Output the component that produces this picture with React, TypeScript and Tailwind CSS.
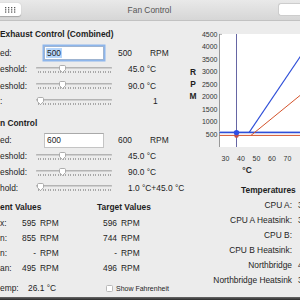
import React from "react";

const Slider = ({ pos }: { pos: number }) => (
  <div className="relative w-[76px] h-[12px] shrink-0">
    <div className="absolute left-0 right-0 top-[3px] h-[2px] rounded-full bg-[#d0d0d0] shadow-[inset_0_1px_0_#b4b4b4]" />
    <div className="absolute left-[2px] right-[1px] top-[7px] h-[2px] bg-[repeating-linear-gradient(90deg,#a8a8a8_0_1px,transparent_1px_2.5px)]" />
    <svg
      className="absolute top-[1px]"
      style={{ left: pos - 3.5 }}
      width="7"
      height="8"
      viewBox="0 0 7 8"
    >
      <path
        d="M0.5 1.6 Q0.5 0.5 1.6 0.5 H5.4 Q6.5 0.5 6.5 1.6 V4.6 L3.5 7.5 L0.5 4.6 Z"
        fill="#ffffff"
        stroke="#9c9c9c"
        strokeWidth="0.8"
      />
    </svg>
  </div>
);

const SliderRow = ({
  h,
  label,
  pos,
  value,
  valueMl,
}: {
  h: string;
  label: string;
  pos: number;
  value: string;
  valueMl: string;
}) => (
  <div className={`${h} flex items-center whitespace-nowrap`}>
    <span className="w-[36px] shrink-0">{label}</span>
    <Slider pos={pos} />
    <span className={valueMl}>{value}</span>
  </div>
);

const ValRow = ({ label, cur, tgt }: { label: string; cur: string; tgt: string }) => (
  <div className="h-[15px] flex items-center whitespace-nowrap">
    <span className="w-[20px] shrink-0">{label}</span>
    <span className="w-[16px] text-right shrink-0">{cur}</span>
    <span className="ml-[4px] w-[40px] shrink-0">RPM</span>
    <span className="w-[37px] text-right shrink-0">{tgt}</span>
    <span className="ml-[4px]">RPM</span>
  </div>
);

const TempRow = ({ label, value }: { label: string; value: string }) => (
  <div className="h-[15px] flex items-center whitespace-nowrap">
    <span className="w-[104px] text-right shrink-0">{label}</span>
    <span className="ml-[6px]">{value}</span>
  </div>
);

export default function App() {
  const yLabels = [4500, 4000, 3500, 3000, 2500, 2000, 1500, 1000, 500];
  const xLabels = [30, 40, 50, 60, 70];
  return (
    <div className="w-[300px] h-[300px] overflow-hidden flex flex-col bg-[#ececec] text-[#1e1e1e] text-[8.4px] leading-none font-['Liberation_Sans',Arial,sans-serif]">
      {/* title bar */}
      <div className="h-[21px] shrink-0 flex items-start border-b border-[#c2c2c2] bg-gradient-to-b from-[#e9e9e9] to-[#d6d6d6]">
        <div className="mt-[3px] w-[21px] h-[13px] rounded-r-[3px] bg-white shadow-[0_0.5px_1px_rgba(0,0,0,0.25)] flex items-center justify-center shrink-0">
          <svg width="11" height="6" viewBox="0 0 11 6">
            {[0, 1, 2].map((r) =>
              [0, 1, 2, 3].map((c) => (
                <rect key={`${r}-${c}`} x={c * 3} y={r * 2.2} width="1.3" height="1.3" fill="#5a5a5a" />
              ))
            )}
          </svg>
        </div>
        <div className="flex-1 h-[20px] flex items-center justify-center text-[#555555]">Fan Control</div>
        <div className="mt-[3px] w-[22px] h-[13px] rounded-l-[3px] bg-white border border-r-0 border-[#cdcdcd] shrink-0" />
      </div>

      {/* content */}
      <div className="flex-1 flex min-h-0">
        {/* left column */}
        <div className="w-[188px] shrink-0 flex flex-col pt-[7px]">
          <div className="h-[12px] flex items-center font-bold whitespace-nowrap">Exhaust Control (Combined)</div>
          <div className="mt-[5px] h-[16px] flex items-center whitespace-nowrap">
            <span className="w-[44px] shrink-0">ed:</span>
            <div className="w-[60px] h-[14px] shrink-0 bg-white border border-[#9fb4d0] ring-[1.5px] ring-[#8db6ec] flex items-center pl-[1px]">
              <span className="bg-[#b6d6fb] px-[1px] leading-[10px]">500</span>
            </div>
            <span className="ml-[14px] w-[32px] shrink-0">500</span>
            <span>RPM</span>
          </div>
          <SliderRow h="h-[17px]" label="eshold:" pos={26} value="45.0 °C" valueMl="ml-[16px]" />
          <SliderRow h="h-[16px]" label="eshold:" pos={26} value="90.0 °C" valueMl="ml-[16px]" />
          <SliderRow h="h-[15px]" label=":" pos={4} value="1" valueMl="ml-[41px]" />

          <div className="mt-[8px] h-[12px] flex items-center font-bold whitespace-nowrap">n Control</div>
          <div className="mt-[3px] h-[16px] flex items-center whitespace-nowrap">
            <span className="w-[44px] shrink-0">ed:</span>
            <div className="w-[60px] h-[15px] shrink-0 bg-white border border-[#c4c4c4] border-t-[#a9a9a9] flex items-center pl-[2px]">
              <span>600</span>
            </div>
            <span className="ml-[14px] w-[32px] shrink-0">600</span>
            <span>RPM</span>
          </div>
          <SliderRow h="h-[17px]" label="eshold:" pos={26} value="45.0 °C" valueMl="ml-[16px]" />
          <SliderRow h="h-[15px]" label="eshold:" pos={26} value="90.0 °C" valueMl="ml-[16px]" />
          <SliderRow h="h-[16px]" label="hold:" pos={4} value="1.0 °C+45.0 °C" valueMl="ml-[16px]" />

          <div className="mt-[5px] h-[12px] flex items-center font-bold whitespace-nowrap">
            <span className="w-[97px] shrink-0">ent Values</span>
            <span>Target Values</span>
          </div>
          <div className="mt-[3px] flex flex-col">
            <ValRow label="x:" cur="595" tgt="596" />
            <ValRow label="n:" cur="855" tgt="744" />
            <ValRow label="n:" cur="-" tgt="-" />
            <ValRow label="an:" cur="495" tgt="496" />
          </div>
          <div className="mt-[5px] h-[14px] flex items-center whitespace-nowrap">
            <span className="w-[28px] shrink-0">emp:</span>
            <span className="w-[78px] shrink-0">26.1 °C</span>
            <span className="w-[7px] h-[7px] shrink-0 bg-white border border-[#b9b9b9] rounded-[1.5px]" />
            <span className="ml-[3px] text-[7px]">Show Fahrenheit</span>
          </div>
        </div>

        {/* right column */}
        <div className="flex-1 min-w-0 flex flex-col pt-[7px] overflow-hidden">
          <svg width="112" height="148" viewBox="188 28 112 148" className="shrink-0">
            <rect x="219" y="34" width="90" height="113" fill="#ffffff" />
            <line x1="219.5" y1="34" x2="219.5" y2="147" stroke="#7d7d7d" strokeWidth="0.8" />
            <line x1="219.5" y1="34.4" x2="222" y2="34.4" stroke="#7d7d7d" strokeWidth="0.6" />
            <line x1="236.5" y1="34" x2="236.5" y2="147" stroke="#55559a" strokeWidth="0.9" />
            <line x1="219.5" y1="131.5" x2="300" y2="131.5" stroke="#a9b8f0" strokeWidth="1" />
            <line x1="219.5" y1="132.6" x2="300" y2="132.6" stroke="#2f4fd8" strokeWidth="1.1" />
            <line x1="219.5" y1="135.4" x2="300" y2="135.4" stroke="#d4542c" strokeWidth="1" />
            <line x1="249" y1="132.6" x2="305" y2="49.7" stroke="#2f4fd8" strokeWidth="1.1" />
            <line x1="251" y1="135.4" x2="305" y2="91.4" stroke="#d4542c" strokeWidth="1" />
            <circle cx="236.5" cy="135.6" r="2.3" fill="#c2504a" />
            <circle cx="236.5" cy="132.6" r="2.7" fill="#2e4fe6" />
            {yLabels.map((v) => (
              <text
                key={v}
                x="217.5"
                y={135 - ((v - 500) / 500) * 12.5}
                fontSize="7"
                textAnchor="end"
                dominantBaseline="middle"
                fill="#333333"
                fontFamily="Liberation Sans, Arial, sans-serif"
              >
                {v}
              </text>
            ))}
            {xLabels.map((v, i) => (
              <text
                key={v}
                x={225.5 + i * 15.5}
                y="159"
                fontSize="7"
                textAnchor="middle"
                dominantBaseline="middle"
                fill="#333333"
                fontFamily="Liberation Sans, Arial, sans-serif"
              >
                {v}
              </text>
            ))}
            {["R", "P", "M"].map((c, i) => (
              <text
                key={c}
                x="193"
                y={72.5 + i * 12}
                fontSize="8.4"
                fontWeight="bold"
                textAnchor="middle"
                dominantBaseline="middle"
                fill="#1e1e1e"
                fontFamily="Liberation Sans, Arial, sans-serif"
              >
                {c}
              </text>
            ))}
            <text
              x="247"
              y="171"
              fontSize="8.4"
              fontWeight="bold"
              textAnchor="middle"
              dominantBaseline="middle"
              fill="#1e1e1e"
              fontFamily="Liberation Sans, Arial, sans-serif"
            >
              °C
            </text>
          </svg>
          <div className="mt-[8px] h-[12px] flex items-center font-bold pl-[53px] whitespace-nowrap">Temperatures</div>
          <div className="mt-[2px] flex flex-col">
            <TempRow label="CPU A:" value="33.0 °C" />
            <TempRow label="CPU A Heatsink:" value="31.0 °C" />
            <TempRow label="CPU B:" value="" />
            <TempRow label="CPU B Heatsink:" value="" />
            <TempRow label="Northbridge" value="45.0 °C" />
            <TempRow label="Northbridge Heatsink" value="38.0 °C" />
          </div>
        </div>
      </div>

      <div className="h-[3px] shrink-0 bg-gradient-to-b from-[#6a6a6a] to-[#2a2a2a]" />
    </div>
  );
}
